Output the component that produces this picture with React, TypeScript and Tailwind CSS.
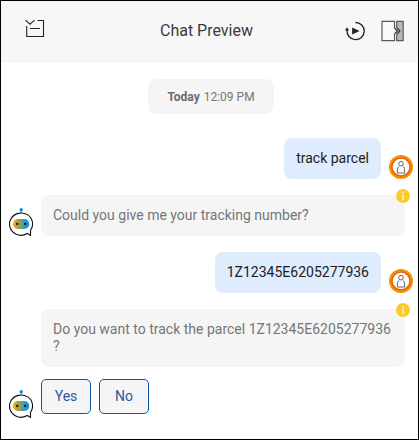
import React from "react";

function ChecklistIcon() {
  return (
    <svg width="20" height="20" viewBox="0 0 20 20" fill="none" stroke="#222" strokeWidth="1.1">
      <path d="M.5 2.2 5 6.2 9.5 2.2" />
      <path d="M12.5 2.5H18.5V18.5H1.7V8M5 10.5H15" />
    </svg>
  );
}

function RestartIcon() {
  return (
    <svg width="20" height="20" viewBox="0 0 20 20" fill="none">
      <path d="M10.4 1.5A8.6 8.6 0 1 1 2.1 9" stroke="#222" strokeWidth="1.3" />
      <path d="M0 9.4 1.9 6.2 4.2 9.4Z" fill="#222" />
      <path d="M7.1 6.4V13.6L14.6 10Z" fill="#222" />
    </svg>
  );
}

function CollapseIcon() {
  return (
    <svg width="23" height="22" viewBox="0 0 23 22" fill="none">
      <path d="M15.5 1.5H22V20.5H15.5Z" fill="#b8b8b8" />
      <path d="M1 1.4H13.5V20.6H1Z" fill="#fafafa" />
      <path d="M13.5 8V1.4H1V20.6H13.5V14M15.7 8V1.4H22.2V20.6H15.7V14" stroke="#5a5a5a" strokeWidth="1.2" />
      <path d="M13.4 8 16.4 11 13.4 14M16 8 19 11 16 14" stroke="#333" strokeWidth="1.1" />
    </svg>
  );
}

function BotIcon() {
  const id = React.useId();
  return (
    <svg className="block shrink-0" width="24" height="28" viewBox="0 0 24 28" fill="none">
      <defs>
        <linearGradient id={id} x1="4" x2="20" y1="0" y2="0" gradientUnits="userSpaceOnUse">
          <stop offset="0" stopColor="#ffb000" />
          <stop offset=".28" stopColor="#b9a13c" />
          <stop offset=".62" stopColor="#5b9c8e" />
          <stop offset=".8" stopColor="#1599d3" />
          <stop offset="1" stopColor="#0095e5" />
        </linearGradient>
      </defs>
      <path d="M12.2 2V5" stroke="#3e92bb" />
      <circle cx="12.2" cy="1.8" r="1.7" fill="#0795d5" />
      <path d="M21.5 22.5C25.2 17 23.7 10 18.7 6.9C13 3.4 5.2 4.9 1.8 11C-1.1 16.5 1.2 23.3 6.8 26.1C10.6 28 14.7 27.6 18.2 25.5L21.5 27.4Z" fill="white" stroke="#111" strokeWidth="1.1" />
      <rect x="4" y="11" width="16.2" height="10" rx="4.8" fill={`url(#${id})`} />
      <circle cx="8.2" cy="16" r="1.15" fill="#111" />
      <circle cx="16.1" cy="16" r="1.15" fill="#111" />
    </svg>
  );
}

function UserAvatar() {
  return (
    <svg className="block shrink-0" width="24" height="24" viewBox="0 0 24 24" fill="none">
      <circle cx="12" cy="12" r="12" fill="#f29200" />
      <circle cx="12" cy="12" r="9.8" fill="#e9600a" />
      <circle cx="12" cy="12" r="8.3" fill="white" />
      <circle cx="12" cy="8.7" r="2.3" stroke="#555" strokeWidth=".9" />
      <path d="M10.3 11.3C9 12 8.4 13.4 8.4 15V18H15.6V15C15.6 13.4 15 12 13.7 11.3" stroke="#555" strokeWidth=".9" />
    </svg>
  );
}

function InfoBadge() {
  return (
    <svg className="absolute -top-1.5 -right-[5px]" width="14" height="14" viewBox="0 0 14 14">
      <circle cx="7" cy="7" r="7" fill="#ffca28" />
      <path d="M6.1 2.8H7.9V4.6H6.1ZM6.1 5.8H7.9V11.2H6.1Z" fill="#fff0bd" />
    </svg>
  );
}

function UserMessage({ text }: { text: string }) {
  return (
    <div className="flex items-end justify-end gap-2 pr-[5px]">
      <p className="rounded-lg bg-[#deecfe] p-3 text-[#1c1c1c]">{text}</p>
      <UserAvatar />
    </div>
  );
}

function BotBubble({ text }: { text: string }) {
  return (
    <div className="relative w-[364px] rounded-lg bg-[#f5f5f5] p-3 text-[#757575]">
      {text}
      <InfoBadge />
    </div>
  );
}

function Choice({ label }: { label: string }) {
  return (
    <button className="flex h-[35px] w-[50px] items-center justify-center rounded-[5px] border border-[#0b58a4] bg-[#f5f5f5] text-[#2a5aa0]">
      {label}
    </button>
  );
}

export default function App() {
  return (
    <main className="flex h-[440px] w-[419px] flex-col border border-black bg-white font-['Roboto',sans-serif] text-sm leading-[17px]">
      <header className="grid h-[62px] shrink-0 grid-cols-[1fr_auto_1fr] items-center bg-[#f7f7f7] pr-[14px] pl-[24px]">
        <div className="-mt-[8px]"><ChecklistIcon /></div>
        <h1 className="-mt-[3px] pr-[16px] text-base leading-5 text-[#3a3a3a]">Chat Preview</h1>
        <div className="-mt-[2px] flex items-center justify-end gap-[16px]">
          <RestartIcon />
          <CollapseIcon />
        </div>
      </header>
      <section className="flex flex-col gap-4 pt-4">
        <div className="mb-2 ml-[147px] flex h-[35px] w-[126px] items-center justify-center gap-[4px] rounded-lg bg-[#f5f5f5] text-xs text-[#757575]">
          <span className="font-bold text-[#6c6c6c]">Today</span>
          <span>12:09 PM</span>
        </div>
        <UserMessage text="track parcel" />
        <div className="flex items-end gap-2 pl-2">
          <BotIcon />
          <BotBubble text="Could you give me your tracking number?" />
        </div>
        <UserMessage text="1Z12345E6205277936" />
        <div className="flex items-end gap-2 pl-2">
          <div className="-mb-1"><BotIcon /></div>
          <div className="flex flex-col gap-3">
            <BotBubble text="Do you want to track the parcel 1Z12345E6205277936 ?" />
            <div className="flex gap-2">
              <Choice label="Yes" />
              <Choice label="No" />
            </div>
          </div>
        </div>
      </section>
    </main>
  );
}
